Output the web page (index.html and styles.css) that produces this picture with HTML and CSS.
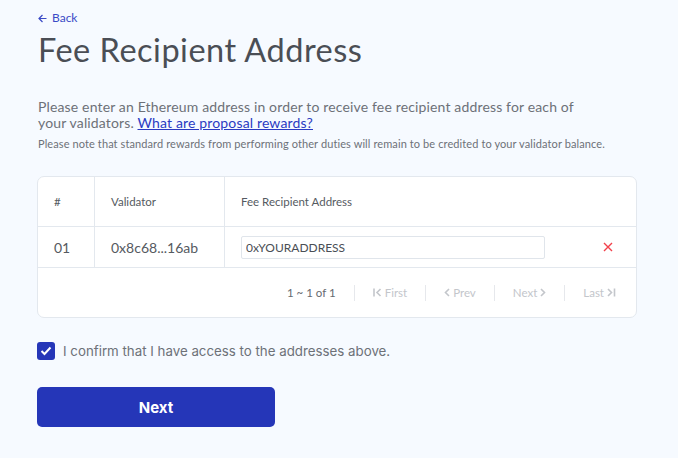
FILE: index.html
```html
<!DOCTYPE html>
<html>
<head>
<meta charset="utf-8">
<link rel="stylesheet" href="styles.css">
</head>
<body>
<div class="page">
  <a class="back" href="#"><svg class="back-ic" width="9" height="9" viewBox="0 0 9 9"><path d="M4.5 1 L1 4.5 L4.5 8 M1 4.5 H8.5" fill="none" stroke="#3a4ac6" stroke-width="1.2"/></svg>Back</a>
  <h1 class="title">Fee Recipient Address</h1>
  <p class="lead">Please enter an Ethereum address in order to receive fee recipient address for each of your validators. <a href="#" class="link">What are proposal rewards?</a></p>
  <p class="note">Please note that standard rewards from performing other duties will remain to be credited to your validator balance.</p>

  <div class="card">
    <div class="row head">
      <div class="cell c1">#</div>
      <div class="cell c2">Validator</div>
      <div class="cell c3">Fee Recipient Address</div>
      <div class="cell c4"></div>
    </div>
    <div class="row body">
      <div class="cell c1">01</div>
      <div class="cell c2">0x8c68...16ab</div>
      <div class="cell c3"><input class="addr" type="text" value="0xYOURADDRESS"></div>
      <div class="cell c4"><svg width="10" height="10" viewBox="0 0 10 10"><path d="M1 1 L9 9 M9 1 L1 9" stroke="#f2414b" stroke-width="1.4"/></svg></div>
    </div>
    <div class="pager">
      <span class="pg count">1 ~ 1 of 1</span>
      <span class="sep"></span>
      <span class="pg dis"><svg class="ic" width="9" height="9" viewBox="0 0 9 9"><path d="M1 0.5 V8.5 M7.5 1 L4 4.5 L7.5 8" fill="none" stroke="#c3c6cb" stroke-width="1.6"/></svg>First</span>
      <span class="sep"></span>
      <span class="pg dis"><svg class="ic" width="6" height="9" viewBox="0 0 6 9"><path d="M5 1 L1.5 4.5 L5 8" fill="none" stroke="#c3c6cb" stroke-width="1.6"/></svg>Prev</span>
      <span class="sep"></span>
      <span class="pg dis">Next<svg class="ic r" width="6" height="9" viewBox="0 0 6 9"><path d="M1 1 L4.5 4.5 L1 8" fill="none" stroke="#c3c6cb" stroke-width="1.6"/></svg></span>
      <span class="sep"></span>
      <span class="pg dis">Last<svg class="ic r" width="9" height="9" viewBox="0 0 9 9"><path d="M1 1 L4.5 4.5 L1 8 M7.5 0.5 V8.5" fill="none" stroke="#c3c6cb" stroke-width="1.6"/></svg></span>
    </div>
  </div>

  <label class="confirm">
    <span class="box"><svg width="12" height="10" viewBox="0 0 12 10"><path d="M1.5 5 L4.5 8 L10.5 1.5" fill="none" stroke="#fff" stroke-width="2"/></svg></span>
    <span class="confirm-text">I confirm that I have access to the addresses above.</span>
  </label>

  <button class="next-btn">Next</button>
</div>
</body>
</html>
```

FILE: styles.css
```css
html, body {
  margin: 0;
  padding: 0;
  background: #f6faff;
}
body {
  font-family: Lato, "Noto Sans", sans-serif;
  color: #4a4e55;
}
.page {
  padding: 10px 38px 0 38px;
  width: 599px;
}
.back {
  display: flex;
  align-items: center;
  gap: 5px;
  font-size: 12px;
  line-height: 16px;
  color: #3a4ac6;
  text-decoration: none;
}
.title {
  margin: 4px 0 0 0;
  font-size: 32.5px;
  line-height: 40px;
  font-weight: 400;
  color: #4a4e55;
  letter-spacing: 0.5px;
}
.lead {
  margin: 29px 0 0 0;
  font-size: 14px;
  line-height: 16px;
  color: #6d7178;
  width: 560px;
  letter-spacing: 0.15px;
}
.link {
  color: #2a3ac2;
  text-decoration: underline;
}
.note {
  margin: 6px 0 0 0;
  font-size: 11px;
  line-height: 13px;
  color: #6d7178;
  letter-spacing: 0.1px;
  white-space: nowrap;
}
.card {
  margin-top: 26px;
  margin-left: -1px;
  background: #fff;
  border: 1px solid #e3e8ee;
  border-radius: 7px;
}
.row {
  display: grid;
  grid-template-columns: 57px 130px 1fr 56px;
  border-bottom: 1px solid #e3e8ee;
}
.head { height: 49px; }
.body { height: 40px; }
.cell {
  display: flex;
  align-items: center;
  padding-left: 16px;
}
.c1, .c2 { border-right: 1px solid #e3e8ee; }
.head .cell {
  font-size: 11.5px;
  color: #555a61;
}
.body .cell {
  font-size: 14px;
  color: #555a61;
}
.c4 {
  padding-left: 0;
  justify-content: center;
}
.addr {
  width: 304px;
  height: 23px;
  box-sizing: border-box;
  border: 1px solid #e0e5eb;
  border-radius: 2px;
  padding: 0 4px;
  font-family: Lato, "Noto Sans", sans-serif;
  font-size: 12px;
  color: #4a4e55;
  outline: none;
}
.pager {
  height: 49px;
  display: flex;
  align-items: center;
  justify-content: flex-end;
  padding-right: 20px;
  font-size: 11.5px;
}
.pg {
  display: flex;
  align-items: center;
  color: #666a70;
}
.dis { color: #c3c6cb; }
.ic { margin-right: 3px; }
.ic.r { margin-left: 3px; margin-right: 0; }
.sep {
  width: 1px;
  height: 16px;
  background: #e6e8ec;
  margin: 0 18px;
}
.confirm {
  display: flex;
  align-items: center;
  gap: 8px;
  margin-top: 24px;
  margin-left: -1px;
}
.box {
  width: 18px;
  height: 18px;
  background: #2536b8;
  border-radius: 3px;
  display: flex;
  align-items: center;
  justify-content: center;
}
.confirm-text {
  font-family: Inter, sans-serif;
  font-size: 13.3px;
  color: #6d7178;
}
.next-btn {
  display: block;
  margin-top: 27px;
  margin-left: -1px;
  width: 238px;
  height: 40px;
  background: #2536b8;
  border: none;
  border-radius: 5px;
  color: #fff;
  font-family: Inter, sans-serif;
  font-weight: 700;
  font-size: 15px;
}
```
